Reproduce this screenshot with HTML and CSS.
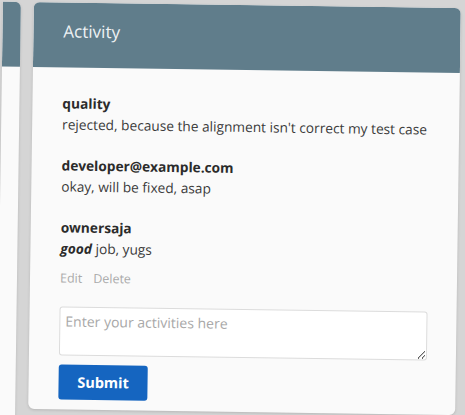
FILE: index.html
```html
<!DOCTYPE html>
<html>
<head>
<meta charset="utf-8">
<link rel="stylesheet" href="styles.css">
</head>
<body>
<div class="stage">
  <div class="row">
    <div class="card card-left">
      <div class="card-head"></div>
    </div>
    <div class="card card-main">
      <div class="card-head"><h2 class="title">Activity</h2></div>
      <div class="card-body">
        <div class="comment">
          <div class="author">quality</div>
          <div class="text">rejected, because the alignment isn't correct my test case</div>
        </div>
        <div class="comment">
          <div class="author">developer@example.com</div>
          <div class="text">okay, will be fixed, asap</div>
        </div>
        <div class="comment">
          <div class="author">ownersaja</div>
          <div class="text"><em>good</em> job, yugs</div>
          <div class="actions"><span>Edit</span><span>Delete</span></div>
        </div>
        <form class="form">
          <textarea class="input" placeholder="Enter your activities here"></textarea>
          <button type="button" class="btn">Submit</button>
        </form>
      </div>
    </div>
  </div>
</div>
</body>
</html>
```
FILE: styles.css
```css
html, body {
  margin: 0;
  padding: 0;
  background: #d5d5d5;
  overflow: hidden;
  width: 465px;
  height: 415px;
}
body {
  font-family: "Open Sans", "Noto Sans", sans-serif;
  color: #333;
}
.stage {
  width: 465px;
  height: 415px;
  transform: rotate(0.8deg);
  transform-origin: 244px 208px;
}
.row {
  display: grid;
  grid-template-columns: 18px 427px;
  column-gap: 13px;
  padding-top: 5px;
}
.card {
  background: #fafafa;
  border-radius: 6px;
  overflow: hidden;
  box-shadow: 0 1px 3px rgba(0,0,0,0.15);
  display: flex;
  flex-direction: column;
}
.card-left {
  border-radius: 0 6px 6px 0;
  height: 420px;
}
.card-head {
  background: #607d8b;
  height: 65px;
  box-sizing: border-box;
  padding: 17px 30px 0;
  flex: none;
}
.title {
  margin: 0;
  font-size: 17px;
  line-height: 24px;
  font-weight: 400;
  color: #eef2f4;
}
.card-main {
  height: 407px;
}
.card-body {
  padding: 25px 30px 4px 30px;
  display: flex;
  flex-direction: column;
}
.comment {
  margin-bottom: 20px;
  font-size: 13.7px;
  line-height: 21px;
}
.comment:nth-child(3) {
  margin-bottom: 0;
}
.author {
  font-weight: 700;
  color: #2b2b2b;
}
.text {
  color: #3a3a3a;
}
.text em {
  font-weight: 700;
  font-style: italic;
  color: #2b2b2b;
}
.actions {
  margin-top: 11px;
  display: flex;
  gap: 11px;
  font-size: 12.5px;
  line-height: 18px;
  color: #aaa;
}
.form {
  margin-top: 19px;
  display: flex;
  flex-direction: column;
  align-items: flex-start;
  gap: 9px;
}
.input {
  box-sizing: border-box;
  width: 368px;
  height: 49px;
  border: 1px solid #dcdcdc;
  border-radius: 3px;
  background: #fff;
  font-family: inherit;
  font-size: 14px;
  padding: 4px 5px;
  margin: 0;
}
.input::placeholder {
  color: #a8a8a8;
}
.btn {
  width: 89px;
  height: 35px;
  border: none;
  border-radius: 3px;
  background: #1565c0;
  color: #fff;
  font-family: inherit;
  font-weight: 700;
  font-size: 14.5px;
}
```
